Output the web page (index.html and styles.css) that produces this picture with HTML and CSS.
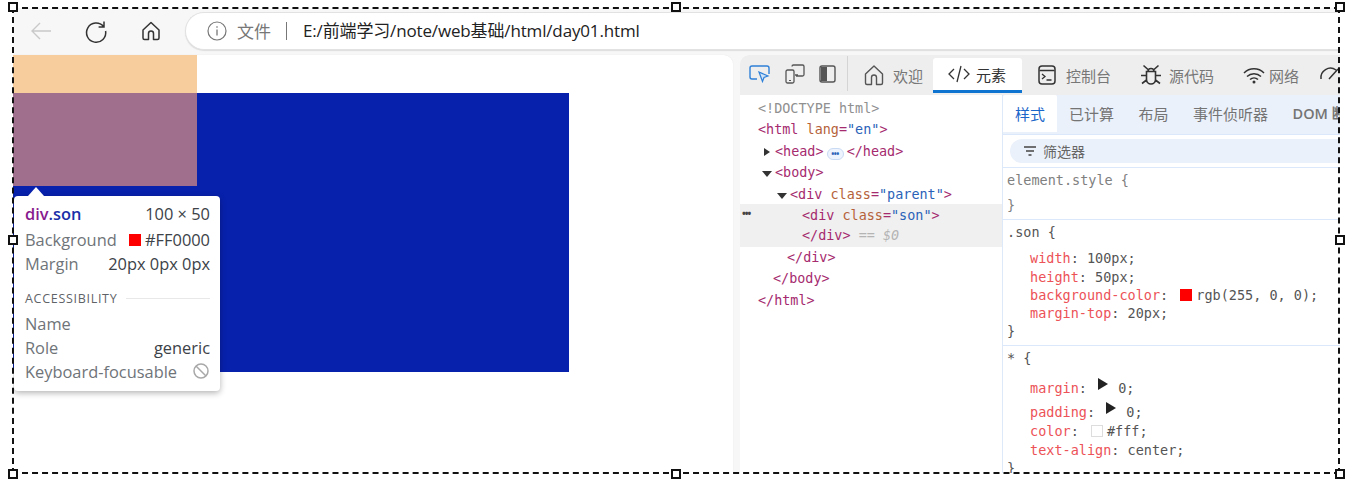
FILE: index.html
```html
<!DOCTYPE html>
<html lang="zh">
<head>
<meta charset="utf-8">
<title>day01</title>
<link rel="stylesheet" href="styles.css">
</head>
<body>
<div class="shot">
  <div class="window">
    <header class="toolbar">
      <svg class="tb-icon back" width="26" height="26" viewBox="0 0 26 26"><path d="M23 13H4M12 5l-8 8 8 8" fill="none" stroke="#c9c9c9" stroke-width="1.4"/></svg>
      <svg class="tb-icon reload" width="26" height="26" viewBox="0 0 26 26"><path d="M20.5 8.5A9.6 9.6 0 1 0 22.6 13M21 3.5v5.4h-5.4" fill="none" stroke="#333" stroke-width="1.5"/></svg>
      <svg class="tb-icon home" width="24" height="24" viewBox="0 0 24 24"><path d="M9.5 20.5H5.5a1.5 1.5 0 0 1-1.5-1.5v-8L12 3.5l8 7.5v8a1.5 1.5 0 0 1-1.500 1.500h-4v-6a2.500 2.500 0 0 0-5 0z" fill="none" stroke="#333" stroke-width="1.500" stroke-linejoin="round"/></svg>
      <div class="address">
        <svg width="20" height="20" viewBox="0 0 20 20"><circle cx="10" cy="10" r="9" fill="none" stroke="#777" stroke-width="1.200"/><path d="M10 8.500v6M10 5.200v1.600" stroke="#777" stroke-width="1.300"/></svg>
        <span class="addr-file">文件</span>
        <span class="addr-sep"></span>
        <span class="addr-url">E:/前端学习/note/web基础/html/day01.html</span>
      </div>
    </header>
    <div class="content">
      <main class="page">
        <div class="parent"></div>
        <div class="margin-hl"></div>
        <div class="son-hl"></div>
        <div class="tip">
          <div class="tip-row tip-head"><span class="tip-name"><b class="t-tag">div</b><b class="t-class">.son</b></span><span class="t-val">100 × 50</span></div>
          <div class="tip-row"><span>Background</span><span class="t-val"><i class="sw sw-tip"></i>#FF0000</span></div>
          <div class="tip-row"><span>Margin</span><span class="t-val">20px 0px 0px</span></div>
          <div class="tip-sec"><span>ACCESSIBILITY</span><i></i></div>
          <div class="tip-row"><span>Name</span></div>
          <div class="tip-row"><span>Role</span><span class="t-val">generic</span></div>
          <div class="tip-row"><span>Keyboard-focusable</span>
            <svg width="18" height="18" viewBox="0 0 18 18"><circle cx="9" cy="9" r="7" fill="none" stroke="#a8a8a8" stroke-width="1.500"/><path d="M4 4l10 10" stroke="#a8a8a8" stroke-width="1.500"/></svg>
          </div>
        </div>
      </main>
      <section class="devtools">
        <nav class="dt-tabs">
          <div class="dt-tools">
            <svg width="24" height="22" viewBox="0 0 24 22"><path d="M9 16H4a2 2 0 0 1-2-2V5a2 2 0 0 1 2-2h15a2 2 0 0 1 2 2v6" fill="none" stroke="#2f80d8" stroke-width="1.400"/><path d="M11 9l9 4-4 1.500-1.500 4z" fill="#cfe3f8" stroke="#2f80d8" stroke-width="1.200"/></svg>
            <svg width="24" height="22" viewBox="0 0 24 22"><path d="M9 3.500a1.500 1.500 0 0 1 1.500-1.500h9A1.500 1.500 0 0 1 21 3.500v8a1.500 1.500 0 0 1-1.500 1.500H13M12 12h3" fill="none" stroke="#555" stroke-width="1.300"/><rect x="3" y="7" width="8" height="13" rx="1.500" fill="#f0f0f0" stroke="#555" stroke-width="1.300"/><path d="M6 17.500h2" stroke="#555"/></svg>
            <svg width="20" height="22" viewBox="0 0 20 22"><rect x="2" y="3" width="15" height="16" rx="2" fill="none" stroke="#555" stroke-width="1.400"/><path d="M3 4h6v14H3z" fill="#555"/></svg>
          </div>
          <div class="dt-tab t-welcome"><svg width="24" height="24" viewBox="0 0 24 24"><path d="M9.500 21.500H5a1.500 1.500 0 0 1-1.500-1.500v-9L12 3l8.500 8v9a1.500 1.500 0 0 1-1.500 1.500h-4.500v-7a2.500 2.500 0 0 0-5 0z" fill="none" stroke="#555" stroke-width="1.400" stroke-linejoin="round"/></svg><span>欢迎</span></div>
          <div class="dt-tab active"><svg width="24" height="20" viewBox="0 0 24 20"><path d="M7 5l-5 5 5 5M17 5l5 5-5 5M14 2l-4 16" fill="none" stroke="#333" stroke-width="1.300"/></svg><span>元素</span></div>
          <div class="dt-tab t-console"><svg width="20" height="22" viewBox="0 0 20 22"><rect x="2" y="2" width="16" height="18" rx="3" fill="none" stroke="#333" stroke-width="1.500"/><path d="M2.500 6.500h15M5 10l3 2.500-3 2.500M9.500 16h5" fill="none" stroke="#333" stroke-width="1.300"/></svg><span>控制台</span></div>
          <div class="dt-tab t-source"><svg width="24" height="24" viewBox="0 0 24 24"><path d="M7.500 8.500h9v8a4.500 4.500 0 0 1-9 0zM9 8.500a3 3 0 0 1 6 0M7.500 12.500H2M16.500 12.500H22M7.500 17l-4.500 3.500M16.500 17l4.500 3.500M9 6.500L4.500 2.500M15 6.500l4.500-4" fill="none" stroke="#333" stroke-width="1.600"/></svg><span>源代码</span></div>
          <div class="dt-tab t-network"><svg width="24" height="20" viewBox="0 0 24 20"><path d="M2 8a14 14 0 0 1 20 0M5 11.500a10 10 0 0 1 14 0M8 14.500a6 6 0 0 1 8 0" fill="none" stroke="#333" stroke-width="1.500"/><circle cx="12" cy="17" r="1.500" fill="#333"/></svg><span>网络</span></div>
          <div class="dt-tab t-perf"><svg width="24" height="22" viewBox="0 0 24 22"><path d="M3 15a9.500 9.500 0 0 1 15-9M11 15l9-10" fill="none" stroke="#333" stroke-width="1.500"/></svg></div>
        </nav>
        <div class="dt-body">
          <div class="dom">
            <div class="dl gray">&lt;!DOCTYPE html&gt;</div>
            <div class="dl"><span class="tg">&lt;html</span> <span class="an">lang</span><span class="tg">=</span><span class="av">"en"</span><span class="tg">&gt;</span></div>
            <div class="dl i1"><i class="tri right"></i><span class="tg">&lt;head&gt;</span><span class="dots">•••</span> <span class="tg">&lt;/head&gt;</span></div>
            <div class="dl i1"><i class="tri down"></i><span class="tg">&lt;body&gt;</span></div>
            <div class="dl i2"><i class="tri down"></i><span class="tg">&lt;div</span> <span class="an">class</span><span class="tg">=</span><span class="av">"parent"</span><span class="tg">&gt;</span></div>
            <div class="selected">
              <span class="sel-dots">•••</span>
              <div class="dl i3"><span class="tg">&lt;div</span> <span class="an">class</span><span class="tg">=</span><span class="av">"son"</span><span class="tg">&gt;</span></div>
              <div class="dl i3"><span class="tg">&lt;/div&gt;</span> <em>== $0</em></div>
            </div>
            <div class="dl i4"><span class="tg">&lt;/div&gt;</span></div>
            <div class="dl i5"><span class="tg">&lt;/body&gt;</span></div>
            <div class="dl"><span class="tg">&lt;/html&gt;</span></div>
          </div>
          <div class="side">
            <div class="side-tabs">
              <span class="s-tab on">样式</span><span class="s-tab">已计算</span><span class="s-tab">布局</span><span class="s-tab">事件侦听器</span><span class="s-tab dom-tab">DOM 断点</span>
            </div>
            <div class="filter-wrap">
              <div class="filter"><svg width="14" height="12" viewBox="0 0 14 12"><path d="M1 2h12M3 6h8M5.500 10h3" stroke="#444" stroke-width="1.300"/></svg><span>筛选器</span></div>
            </div>
            <div class="rule r-el">
              <div class="sel gray2">element.style {</div>
              <div class="close gray2 c-el">}</div>
            </div>
            <div class="rule r-son">
              <div class="sel">.son {</div>
              <div class="decls">
                <div class="d"><span class="p">width</span>: 100px;</div>
                <div class="d"><span class="p">height</span>: 50px;</div>
                <div class="d"><span class="p">background-color</span>: <i class="sw"></i>rgb(255, 0, 0);</div>
                <div class="d"><span class="p">margin-top</span>: 20px;</div>
              </div>
              <div class="close">}</div>
            </div>
            <div class="rule r-all">
              <div class="sel">* {</div>
              <div class="decls d2">
                <div class="d tall"><span class="p">margin</span>: <i class="exp"></i> 0;</div>
                <div class="d tall"><span class="p">padding</span>: <i class="exp"></i> 0;</div>
                <div class="d"><span class="p">color</span>: <i class="sw white"></i>#fff;</div>
                <div class="d"><span class="p">text-align</span>: center;</div>
              </div>
              <div class="close">}</div>
            </div>
          </div>
        </div>
      </section>
    </div>
  </div>
  <div class="marquee"></div>
  <i class="h h-tl"></i><i class="h h-tc"></i><i class="h h-tr"></i>
  <i class="h h-ml"></i><i class="h h-mr"></i>
  <i class="h h-bl"></i><i class="h h-bc"></i><i class="h h-br"></i>
</div>
</body>
</html>
```
FILE: styles.css
```css
* { box-sizing: border-box; }
html, body { margin: 0; padding: 0; background: #fff; }
body {
  width: 1354px;
  height: 485px;
  overflow: hidden;
  font-family: "Open Sans", "Noto Sans CJK SC", sans-serif;
}
.shot { position: relative; width: 1354px; height: 485px; padding: 8px 14px 0 13px; }
.window { width: 1327px; height: 465px; overflow: hidden; background: #f7f7f7; display: flex; flex-direction: column; }

.toolbar { height: 47px; flex: none; display: flex; align-items: center; padding: 0 0 1px 15px; }
.tb-icon { flex: none; }
.reload { margin-left: 29px; }
.home { margin-left: 30px; }
.address {
  margin-left: 22px; flex: 1; height: 38px; margin-right: -40px;
  background: #fff; border: 1px solid #e2e2e2; border-right: 0;
  border-radius: 19px 0 0 19px;
  display: flex; align-items: center; padding-left: 21px;
  box-shadow: 0 1px 1px #ddd;
}
.addr-file { margin-left: 10px; padding-bottom: 1px; font: 17px "Noto Sans CJK SC", sans-serif; color: #777; }
.addr-sep { width: 1px; height: 18px; background: #777; margin: 0 16px 0 15px; }
.addr-url { padding-bottom: 3px; font: 17px "Open Sans", "Noto Sans CJK SC", sans-serif; color: #222; letter-spacing: -.15px; }

.content { flex: 1; display: flex; min-height: 0; }
.page { position: relative; width: 720px; flex: none; background: #fff; border-top-right-radius: 9px; overflow: hidden; box-shadow: 0 0 1px #ddd; }
.parent { position: absolute; left: 0; top: 38px; width: 556px; height: 279px; background: #0821ad; }
.margin-hl { position: absolute; left: 0; top: 0; width: 184px; height: 38px; background: #f8cd9e; }
.son-hl { position: absolute; left: 0; top: 38px; width: 184px; height: 93px; background: #a06f8e; }

.tip {
  position: absolute; left: 1px; top: 141px; width: 206px; height: 195px;
  background: #fff; border-radius: 4px; padding: 5px 10px 0 11px;
  box-shadow: 0 2px 6px rgba(0,0,0,.3);
  font-size: 16.400px; color: #6f7479;
}
.tip::before {
  content: ""; position: absolute; left: 14px; top: -9px;
  border: 8px solid transparent; border-top: 0; border-bottom: 9px solid #fff;
}
.tip-row { display: flex; justify-content: space-between; align-items: center; height: 23.600px; white-space: nowrap; }
.tip-head { height: 24px; margin-bottom: 3px; }
.t-val { color: #3c4248; display: flex; align-items: center; }
.t-tag { color: #881b8e; font-weight: 600; }
.t-class { color: #1a2fa8; font-weight: 600; }
.sw-tip { width: 13px; height: 13px; margin: 0 2px 0 0; }
.tip-sec { display: flex; align-items: center; gap: 9px; font-size: 12.500px; letter-spacing: .7px; height: 22px; margin: 12px 0 3px; color: #5f6368; }
.tip-sec i { flex: 1; height: 1px; background: #e8e8e8; }

.devtools { flex: 1; margin-left: 7px; min-width: 0; display: flex; flex-direction: column; overflow: hidden; border-top-left-radius: 9px; background: #fff; }
.dt-tabs { height: 40px; flex: none; display: flex; background: #eeeeee; white-space: nowrap; font: 15px "Noto Sans CJK SC", sans-serif; color: #777; }
.dt-tools { width: 108px; flex: none; display: flex; align-items: center; padding-left: 8px; gap: 11px; border-right: 1px solid #d4d4d4; margin: 1px 0 4px; }
.dt-tab { height: 38px; margin-top: 3px; display: flex; align-items: center; gap: 7px; flex: none; padding-bottom: 4px; }
.dt-tab svg { flex: none; }
.t-welcome { width: 85px; padding-left: 14px; }
.active { width: 89px; padding-left: 14px; gap: 5px; background: #fff; color: #333; border-radius: 3px 3px 0 0; border-bottom: 3px solid #0f74cf; height: 35px; padding-bottom: 0; }
.t-console { width: 103px; padding-left: 15px; gap: 9px; }
.t-source { width: 102px; padding-left: 14px; gap: 6px; }
.t-network { width: 91px; padding-left: 15px; gap: 3px; }

.dt-body { flex: 1; display: flex; min-height: 0; }
.dom { width: 262px; flex: none; padding-top: 3px; font: 13.450px/21.400px "DejaVu Sans Mono", monospace; white-space: nowrap; }
.dl { height: 21.400px; padding-left: 18px; }
.i1 { padding-left: 35px; position: relative; }
.i2 { padding-left: 50px; position: relative; }
.i3 { padding-left: 62px; }
.i4 { padding-left: 47px; }
.i5 { padding-left: 33px; }
.gray { color: #909090; }
.tg { color: #a52a6e; }
.an { color: #b5623a; }
.av { color: #2a62b8; }
.dl em { color: #b4b4b4; }
.tri { position: absolute; }
.tri.right { left: 24px; top: 7px; border-left: 6px solid #333; border-top: 4.500px solid transparent; border-bottom: 4.500px solid transparent; }
.tri.down { left: 22px; top: 9px; border-top: 6px solid #333; border-left: 5px solid transparent; border-right: 5px solid transparent; }
.i2 .tri.down { left: 37px; }
.dots {
  display: inline-flex; align-items: center; justify-content: center;
  width: 17px; height: 12px; margin: 0 -5px 0 3px; border: 1px solid #c9daf3; border-radius: 6px;
  background: #eef4fd; color: #2a62b8; font: 700 8px/1 "Open Sans", sans-serif; letter-spacing: -.5px; vertical-align: -1px;
}
.selected { position: relative; background: #f0f0f0; height: 43px; margin-top: -1px; padding-top: 2px; }
.selected .dl { height: 20.500px; line-height: 20.500px; }
.sel-dots { position: absolute; left: 2px; top: 1px; font: 700 10px/16px "Open Sans", sans-serif; color: #444; letter-spacing: -1px; }

.side { flex: 1; min-width: 0; border-left: 1px solid #dde8f8; font: 13.500px/18.300px "DejaVu Sans Mono", monospace; color: #555; white-space: nowrap; overflow: hidden; }
.side-tabs { height: 40px; background: #ebf1fa; border-bottom: 1px solid #dbe7fa; display: flex; font: 15px/38px "Noto Sans CJK SC", sans-serif; color: #747474; }
.s-tab { padding: 0 12.500px 0 12px; flex: none; height: 37px; }
.s-tab.on { background: #fff; color: #1a66c9; width: 54px; border-radius: 2px 2px 0 0; }
.dom-tab { font: 600 14.500px/38px "Open Sans", "Noto Sans CJK SC", sans-serif; }
.filter-wrap { height: 33px; padding: 4px 0 0 7px; border-bottom: 1px solid #dbe7fa; }
.filter { height: 24px; background: #ebf1fa; border-radius: 12px 0 0 12px; display: flex; align-items: center; gap: 6px; padding-left: 13px; font: 14px "Noto Sans CJK SC", sans-serif; color: #666; }
.rule { border-bottom: 1px solid #dbe7fa; padding-left: 4px; }
.r-el { height: 52px; padding-top: 3px; }
.gray2 { color: #808080; }
.c-el { margin-top: 7px; }
.r-son { height: 126px; padding-top: 3px; }
.decls { margin-top: 8px; padding-left: 23px; }
.r-all { padding-top: 3px; border: 0; }
.d2 { margin-top: 9px; }
.d.tall { height: 24px; line-height: 24px; }
.d.tall + .d:not(.tall) { margin-top: -2px; }
.p { color: #ec5257; }
.sw { display: inline-block; width: 12px; height: 12px; background: #f00; vertical-align: -1px; margin: 0 4px 0 4px; }
.sw.white { background: #fff; border: 1px solid #ddd; }
.exp { display: inline-block; width: 0; height: 0; border-left: 10px solid #222; border-top: 6px solid transparent; border-bottom: 6px solid transparent; vertical-align: 3px; margin: 0 2px 0 3px; }

.marquee { position: absolute; left: 12px; top: 7px; width: 1328px; height: 467px; border: 2px dashed #111; pointer-events: none; }
.h { position: absolute; width: 10px; height: 10px; background: #fff; border: 2px solid #111; }
.h-tl { left: 8px; top: 2px; }
.h-tc { left: 671px; top: 2px; }
.h-tr { left: 1335px; top: 2px; }
.h-ml { left: 8px; top: 235px; }
.h-mr { left: 1335px; top: 235px; }
.h-bl { left: 8px; top: 469px; }
.h-bc { left: 671px; top: 469px; }
.h-br { left: 1335px; top: 469px; }
```
